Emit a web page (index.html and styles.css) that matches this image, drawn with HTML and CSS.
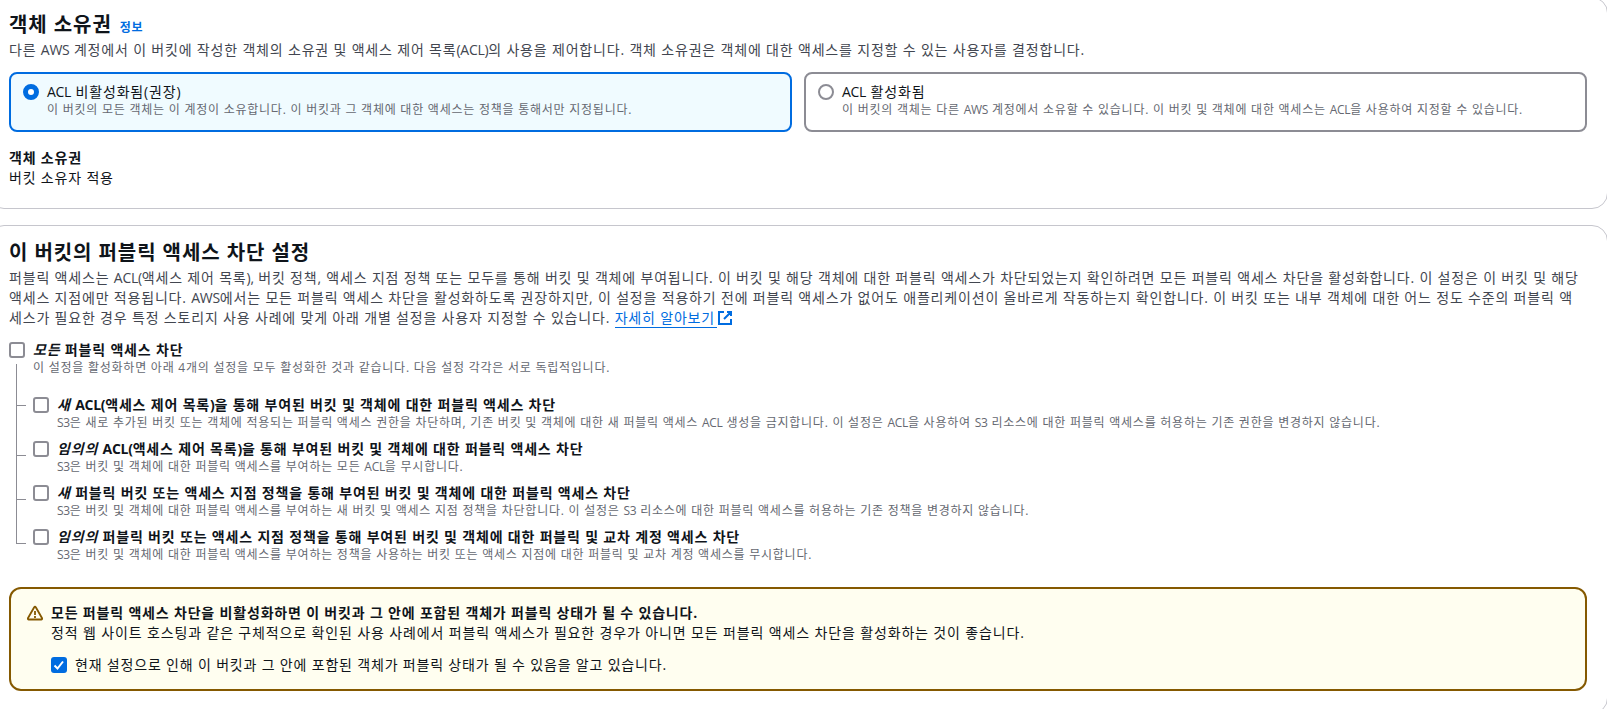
FILE: index.html
```html
<!DOCTYPE html>
<html lang="ko">
<head>
  <meta charset="UTF-8">
  <meta name="viewport" content="width=device-width, initial-scale=1.0">
  <title>버킷 만들기</title>
  <link rel="stylesheet" href="styles.css">
</head>
<body>
  <main class="page">
    <section class="container ownership">
      <div class="heading">
        <h2>객체 소유권</h2>
        <a class="info" href="#">정보</a>
      </div>
      <p class="description">다른 <span class="en">AWS</span> 계정에서 이 버킷에 작성한 객체의 소유권 및 액세스 제어 목록<span class="en">(ACL)</span>의 사용을 제어합니다. 객체 소유권은 객체에 대한 액세스를 지정할 수 있는 사용자를 결정합니다.</p>

      <div class="tiles">
        <label class="tile selected">
          <span class="radio checked"></span>
          <span class="text">
            <span class="label"><span class="en">ACL</span> 비활성화됨(권장)</span>
            <span class="hint">이 버킷의 모든 객체는 이 계정이 소유합니다. 이 버킷과 그 객체에 대한 액세스는 정책을 통해서만 지정됩니다.</span>
          </span>
        </label>
        <label class="tile">
          <span class="radio"></span>
          <span class="text">
            <span class="label"><span class="en">ACL</span> 활성화됨</span>
            <span class="hint">이 버킷의 객체는 다른 <span class="en">AWS</span> 계정에서 소유할 수 있습니다. 이 버킷 및 객체에 대한 액세스는 <span class="en">ACL</span>을 사용하여 지정할 수 있습니다.</span>
          </span>
        </label>
      </div>

      <div class="summary">
        <div class="bold">객체 소유권</div>
        <div>버킷 소유자 적용</div>
      </div>
    </section>

    <section class="container public-access">
      <div class="heading">
        <h2>이 버킷의 퍼블릭 액세스 차단 설정</h2>
      </div>
      <p class="description">퍼블릭 액세스는 <span class="en">ACL(</span>액세스 제어 목록<span class="en">),</span> 버킷 정책, 액세스 지점 정책 또는 모두를 통해 버킷 및 객체에 부여됩니다. 이 버킷 및 해당 객체에 대한 퍼블릭 액세스가 차단되었는지 확인하려면 모든 퍼블릭 액세스 차단을 활성화합니다. 이 설정은 이 버킷 및 해당<br>
        액세스 지점에만 적용됩니다. <span class="en">AWS</span>에서는 모든 퍼블릭 액세스 차단을 활성화하도록 권장하지만, 이 설정을 적용하기 전에 퍼블릭 액세스가 없어도 애플리케이션이 올바르게 작동하는지 확인합니다. 이 버킷 또는 내부 객체에 대한 어느 정도 수준의 퍼블릭 액<br>
        세스가 필요한 경우 특정 스토리지 사용 사례에 맞게 아래 개별 설정을 사용자 지정할 수 있습니다. <a class="link" href="#">자세히 알아보기</a><svg class="external" viewBox="0 0 16 16" width="16" height="16"><path d="M10 2h4v4M7 9l7-7M14 9v5H2V2h5"/></svg></p>

      <label class="check-row">
        <span class="checkbox"></span>
        <span class="text">
          <span class="label bold"><em>모든</em> 퍼블릭 액세스 차단</span>
          <span class="hint">이 설정을 활성화하면 아래 4개의 설정을 모두 활성화한 것과 같습니다. 다음 설정 각각은 서로 독립적입니다.</span>
        </span>
      </label>

      <div class="tree">
        <div class="branches">
          <span></span>
          <span></span>
          <span></span>
          <span></span>
        </div>
        <div class="children">
          <label class="check-row">
            <span class="checkbox"></span>
            <span class="text">
              <span class="label bold"><em>새</em> <span class="en">ACL(</span>액세스 제어 목록<span class="en">)</span>을 통해 부여된 버킷 및 객체에 대한 퍼블릭 액세스 차단</span>
              <span class="hint"><span class="en">S3</span>은 새로 추가된 버킷 또는 객체에 적용되는 퍼블릭 액세스 권한을 차단하며, 기존 버킷 및 객체에 대한 새 퍼블릭 액세스 <span class="en">ACL</span> 생성을 금지합니다. 이 설정은 <span class="en">ACL</span>을 사용하여 <span class="en">S3</span> 리소스에 대한 퍼블릭 액세스를 허용하는 기존 권한을 변경하지 않습니다.</span>
            </span>
          </label>
          <label class="check-row">
            <span class="checkbox"></span>
            <span class="text">
              <span class="label bold"><em>임의의</em> <span class="en">ACL(</span>액세스 제어 목록<span class="en">)</span>을 통해 부여된 버킷 및 객체에 대한 퍼블릭 액세스 차단</span>
              <span class="hint"><span class="en">S3</span>은 버킷 및 객체에 대한 퍼블릭 액세스를 부여하는 모든 <span class="en">ACL</span>을 무시합니다.</span>
            </span>
          </label>
          <label class="check-row">
            <span class="checkbox"></span>
            <span class="text">
              <span class="label bold"><em>새</em> 퍼블릭 버킷 또는 액세스 지점 정책을 통해 부여된 버킷 및 객체에 대한 퍼블릭 액세스 차단</span>
              <span class="hint"><span class="en">S3</span>은 버킷 및 객체에 대한 퍼블릭 액세스를 부여하는 새 버킷 및 액세스 지점 정책을 차단합니다. 이 설정은 <span class="en">S3</span> 리소스에 대한 퍼블릭 액세스를 허용하는 기존 정책을 변경하지 않습니다.</span>
            </span>
          </label>
          <label class="check-row">
            <span class="checkbox"></span>
            <span class="text">
              <span class="label bold"><em>임의의</em> 퍼블릭 버킷 또는 액세스 지점 정책을 통해 부여된 버킷 및 객체에 대한 퍼블릭 및 교차 계정 액세스 차단</span>
              <span class="hint"><span class="en">S3</span>은 버킷 및 객체에 대한 퍼블릭 액세스를 부여하는 정책을 사용하는 버킷 또는 액세스 지점에 대한 퍼블릭 및 교차 계정 액세스를 무시합니다.</span>
            </span>
          </label>
        </div>
      </div>

      <div class="alert">
        <svg class="warning" viewBox="0 0 16 16" width="16" height="16"><path d="M7.2 2.2.9 13.2a.9.9 0 0 0 .8 1.3h12.6a.9.9 0 0 0 .8-1.3L8.8 2.2a.9.9 0 0 0-1.6 0z"/><path class="mark" d="M8 6v4M8 11v2"/></svg>
        <div class="alert-body">
          <div class="bold">모든 퍼블릭 액세스 차단을 비활성화하면 이 버킷과 그 안에 포함된 객체가 퍼블릭 상태가 될 수 있습니다.</div>
          <div class="alert-text">정적 웹 사이트 호스팅과 같은 구체적으로 확인된 사용 사례에서 퍼블릭 액세스가 필요한 경우가 아니면 모든 퍼블릭 액세스 차단을 활성화하는 것이 좋습니다.</div>
          <label class="check-row confirm">
            <span class="checkbox checked"><svg viewBox="0 0 16 16" width="16" height="16"><path d="m3.5 8.5 3 3L12 4.5"/></svg></span>
            <span class="label">현재 설정으로 인해 이 버킷과 그 안에 포함된 객체가 퍼블릭 상태가 될 수 있음을 알고 있습니다.</span>
          </label>
        </div>
      </div>
    </section>
  </main>
</body>
</html>
```
FILE: styles.css
```css
* {
  box-sizing: border-box;
}
body {
  margin: 0;
  height: 100vh;
  overflow: hidden;
  background: #fff;
  color: #0f141a;
  font-family: "Open Sans", "Noto Sans CJK KR", sans-serif;
  font-size: 14px;
  line-height: 20px;
  letter-spacing: 0.82px;
  white-space: nowrap;
}
/* the panels run past the window on both sides */
.page {
  display: flex;
  flex-direction: column;
  gap: 16px;
  width: 1620px;
  margin: -3px 0 0 -12px;
}
.container {
  border: 1px solid #c6c6cd;
  border-radius: 16px;
  padding: 14px 20px 20px;
}
.ownership {
  height: 212px;
}
.public-access {
  height: 489px;
}
.heading {
  display: flex;
  align-items: baseline;
  gap: 8px;
  height: 24px;
}
h2 {
  margin: 0;
  font-size: 20px;
  line-height: 25px;
  font-weight: 700;
  letter-spacing: 0.92px;
}
.info {
  color: #006ce0;
  font-size: 12px;
  font-weight: 700;
  line-height: 20px;
  text-decoration: none;
}
.description {
  margin: 4px 0 12px;
  color: #424650;
}
.bold {
  font-weight: 700;
}
/* latin words are set tighter than the hangul round them */
.en {
  letter-spacing: -0.3px;
}
.text {
  display: flex;
  flex-direction: column;
}
.hint {
  color: #656871;
  font-size: 12px;
  line-height: 16px;
  letter-spacing: 0.76px;
}
/* radio tiles */
.tiles {
  display: grid;
  grid-template-columns: 1fr 1fr;
  gap: 12px;
}
.tile {
  display: flex;
  gap: 8px;
  height: 60px;
  padding: 8px 12px;
  border: 2px solid #8c8c94;
  border-radius: 8px;
}
.tile.selected {
  border-color: #006ce0;
  background: #f0fbff;
}
.radio {
  flex: none;
  width: 16px;
  height: 16px;
  margin-top: 2px;
  border: 2px solid #8c8c94;
  border-radius: 50%;
  background: #fff;
}
.radio.checked {
  border: 5px solid #006ce0;
}
.summary {
  margin-top: 16px;
}
/* checkboxes */
.check-row {
  display: flex;
  gap: 8px;
}
.checkbox {
  flex: none;
  width: 16px;
  height: 16px;
  margin-top: 2px;
  border: 2px solid #8c8c94;
  border-radius: 3px;
  background: #fff;
}
.checkbox.checked {
  border: none;
  background: #006ce0;
}
.checkbox svg {
  display: block;
  fill: none;
  stroke: #fff;
  stroke-width: 2;
}
.link {
  display: inline-block;
  height: 20px;
  padding-right: 2px;
  color: #006ce0;
  text-decoration: none;
  border-bottom: 1px solid #006ce0;
}
.external {
  vertical-align: -3px;
  fill: none;
  stroke: #006ce0;
  stroke-width: 2;
}
/* lines that join the parent checkbox to its children */
.tree {
  display: flex;
  gap: 7px;
  margin-top: -12px;
}
.branches {
  display: grid;
  grid-template-rows: 42px 50px 44px 44px;
  width: 10px;
  height: 180px;
  margin-left: 7px;
  border-left: 1px solid #8c8c94;
}
.branches span {
  border-bottom: 1px solid #8c8c94;
}
.children {
  display: flex;
  flex-direction: column;
  gap: 8px;
  padding-top: 31px;
}
.alert {
  display: flex;
  gap: 8px;
  height: 104px;
  margin-top: 24px;
  padding: 14px 16px;
  border: 2px solid #855900;
  border-radius: 12px;
  background: #fffef0;
}
.alert-text {
  letter-spacing: 0.86px;
}
.warning {
  flex: none;
  margin-top: 2px;
  fill: none;
  stroke: #855900;
  stroke-width: 1.8;
  stroke-linejoin: round;
}
.confirm {
  margin-top: 12px;
}
```
